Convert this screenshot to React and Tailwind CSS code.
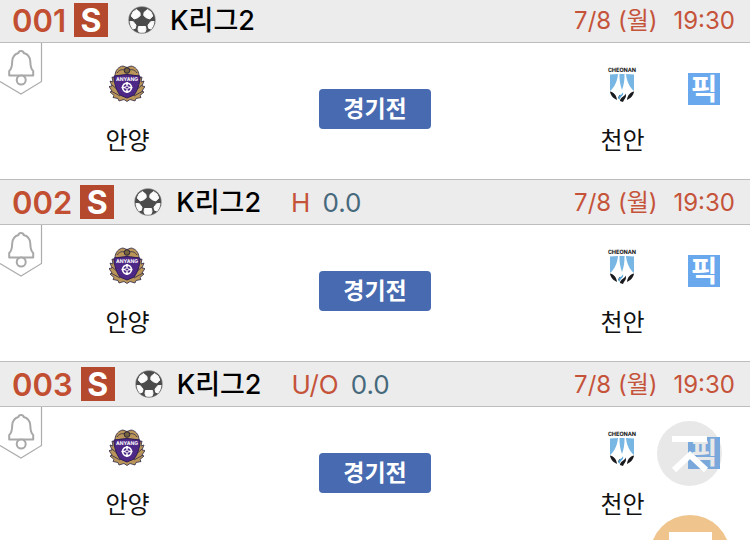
import React from "react";

const matches = [
  { no: "001", date: "7/8 (월)", time: "19:30" },
  { no: "002", type: "H", line: "0.0", date: "7/8 (월)", time: "19:30" },
  { no: "003", type: "U/O", line: "0.0", date: "7/8 (월)", time: "19:30" },
];

function Ball() {
  return (
    <svg viewBox="0 0 28 28" className="h-7 w-7 shrink-0" aria-hidden="true">
      <circle cx="14" cy="14" r="13.700" fill="#8a8a8a" />
      <circle cx="14" cy="14" r="13" fill="#4b4b4b" />
      <g fill="#fbfbfb" stroke="#fbfbfb" strokeWidth="1" strokeLinejoin="round">
        <path d="M12 6.500 8.500 3.500 5 6 3.200 10l3 3 4-1.500 2-2z" />
        <path d="M16 6.500l3.500-3L23 6l1.800 4-3 3-4-1.500-2-2z" />
        <path d="M1.900 15.500l3.400.2 2.700 3.500-.6 3-2.400.8q-2.500-3-3.100-7.500z" />
        <path d="M26.100 15.500l-3.400.2-2.700 3.500.6 3 2.400.8q2.500-3 3.100-7.500z" />
        <path d="M10.500 20.500h7l.5 3.200-1 2.300q-3 .6-6 0l-1-2.300z" />
      </g>
    </svg>
  );
}

function Bell() {
  return (
    <svg viewBox="0 0 43 53" className="h-[53px] w-[43px]" fill="none" stroke="#acacac" aria-hidden="true">
      <path d="M41.500 0v38.500L21 51 0 38.500" strokeWidth="1.200" />
      <g stroke="#a8a8a8" strokeWidth="2" strokeLinejoin="round">
        <path d="M21 8c-1.600 0-2.400.8-2.500 2-4 1.200-6.200 4.400-6.300 8.500-.1 5-.7 7.500-3 9.500v4.500h24V28c-2.300-2-2.800-4.500-2.900-9.500-.1-4.100-2.500-7.300-6.600-8.500C23.500 8.800 22.600 8 21 8z" />
        <circle cx="21.200" cy="37" r="4.500" fill="#fff" />
      </g>
    </svg>
  );
}

function AnyangCrest() {
  return (
    <svg viewBox="0 0 36 38" className="h-[38px] w-9" role="img" aria-label="안양">
      <g fill="#b9955a" stroke="#2e2745" strokeWidth="0.800">
        <path d="M6 11C6 5 10 1.500 14 1l4 1.500L22 1c4 .5 8 4 8 10l-4 2H10z" />
        <path d="M6 13 3 12l1 5-3-1 2 5-3 .5L3 26l-2 1 4 3.500-1 2 5 1 1 2.500 5-1.500 3 2 3-2 5 1.500 1-2.500 5-1-1-2L35 27l-2-1 3-4.500-3-.5 2-5-3 1 1-5-3 1z" />
        <path d="M8 8c2-3 5-4 8-3M28 8c-2-3-5-4-8-3M3 20l7 6M2 26l9 5M33 20l-7 6M34 26l-9 5" fill="none" />
      </g>
      <path d="M5 11q13-3 26 0c0 8-3 15.500-6 19l-7 3-7-3C8 26.500 5 19 5 11z" fill="#4e2886" stroke="#2d1c55" />
      <circle cx="18" cy="5.500" r="2.800" fill="#76623e" stroke="#282338" />
      <text x="18" y="15.500" textAnchor="middle" fill="#fff" fontSize="5" fontWeight="700" textRendering="geometricPrecision" className="font-[Inter,sans-serif]">ANYANG</text>
      <g fill="none" stroke="#fff" strokeWidth="1.600">
        <circle cx="18" cy="22.500" r="4.400" />
        <circle cx="18" cy="22.500" r="1.600" strokeWidth="1" />
        <path d="M18 17v3.500M18 24.500V28M12.500 22.500H16M20 22.500h3.500" />
      </g>
    </svg>
  );
}

function CheonanCrest() {
  return (
    <svg viewBox="0 0 30 38" className="h-[38px] w-[30px]" role="img" aria-label="천안">
      <text x="15" y="7" textAnchor="middle" fill="#161616" fontSize="6" fontWeight="700" textRendering="geometricPrecision" className="font-[Roboto,sans-serif]">CHEONAN</text>
      <path d="M3 9q12-2 24 0v18q-4 6-12 10Q7 33 3 27z" fill="#fff" />
      <g fill="#78b7e4">
        <path d="M3 9.500 11 9c-.5 7-4 14-8 17z" />
        <path d="M27 9.500 19 9c.5 7 4 14 8 17z" />
        <path d="M12.500 9h5c.2 6-.7 11-2.500 16-1.800-5-2.700-10-2.500-16z" />
      </g>
      <g fill="#191a1d">
        <path d="M3 26.500c3 .500 6.500 3 7 8.500-3.500-1.500-6.500-4.500-7-8.500zM27 26.500c-3 .500-6.500 3-7 8.500 3.500-1.500 6.500-4.500 7-8.500z" />
        <path d="M13 36c0-4 5-4 5.500-7.500 1.500 4-1 5-2.500 8.500zM11.500 34c-.5-2 0-3 2-4.500z" />
      </g>
      <path d="M11.500 33c0-3 4-3 4.500-6 1 4-3 4-3.500 8z" fill="#4ba2dc" />
    </svg>
  );
}

function Team({ name, children }) {
  return (
    <div className="flex flex-col items-center gap-[18px] pt-[22px]">
      {children}
      <span className="text-2xl leading-10 text-[#111]">{name}</span>
    </div>
  );
}

function Match({ match }) {
  return (
    <article>
      <header className="flex h-[46px] items-center border-y border-[#bdbdbd] bg-[#ececec] pr-[15px] pl-3">
        <span className="text-[31px] font-semibold text-[#c24f32]">{match.no}</span>
        <span className="ml-2 flex h-[34px] w-[34px] items-center justify-center bg-[#b5492d] pt-0.5 text-[32px] font-bold text-white">S</span>
        <span className="ml-5">
          <Ball />
        </span>
        <h2 className="ml-3.5 text-[27px] font-medium text-black">K리그2</h2>
        {match.type && (
          <p className="ml-[30px] flex gap-3 pt-0.5 text-[26px]">
            <span className="text-[#c5533a]">{match.type}</span>
            <span className="text-[#46697c]">{match.line}</span>
          </p>
        )}
        <p className="ml-auto flex gap-4 pt-0.5 text-2xl text-[#c5533a]">
          <span>{match.date}</span>
          <time>{match.time}</time>
        </p>
      </header>
      <div className="grid h-[136px] grid-cols-[34%_32%_34%]">
        <div className="grid grid-cols-[1fr_auto_1fr] items-start">
          <button type="button" aria-label="알림" className="justify-self-start">
            <Bell />
          </button>
          <Team name="안양">
            <AnyangCrest />
          </Team>
        </div>
        <div className="flex justify-center pt-[46px]">
          <button type="button" className="h-10 w-28 rounded bg-[#476ab0] text-[23px] font-bold text-white">경기전</button>
        </div>
        <div className="grid grid-cols-[1fr_auto_1fr] items-start">
          <span />
          <Team name="천안">
            <CheonanCrest />
          </Team>
          <button type="button" className="mt-[30px] mr-[30px] flex h-8 w-8 items-center justify-center justify-self-end bg-[#6aa8ee] text-[29px] font-bold text-white">픽</button>
        </div>
      </div>
    </article>
  );
}

export default function App() {
  return (
    <div className="h-screen overflow-hidden bg-white font-[Inter,'Noto_Sans_CJK_KR',sans-serif] leading-none">
      <main className="-mt-[3px]">
        {matches.map((m) => (
          <Match key={m.no} match={m} />
        ))}
      </main>
      <button type="button" aria-label="맨 위로" className="fixed right-7 bottom-[54px] h-[65px] w-[65px] rounded-full bg-[#aaaaaa]/27">
        <svg viewBox="0 0 65 65" className="h-full w-full" fill="none" stroke="#fff" aria-hidden="true">
          <path d="M15 18h35" strokeWidth="6" />
          <path d="m17 49 16-15 16 15" strokeWidth="6" />
        </svg>
      </button>
      <button type="button" aria-label="채팅" className="fixed right-5 -bottom-[55px] h-20 w-20 rounded-full bg-[#efc48d]">
        <svg viewBox="0 0 80 80" className="h-full w-full" fill="#fff" aria-hidden="true">
          <path d="M19 17h43v32H40L28 60V49h-9z" />
        </svg>
      </button>
    </div>
  );
}
